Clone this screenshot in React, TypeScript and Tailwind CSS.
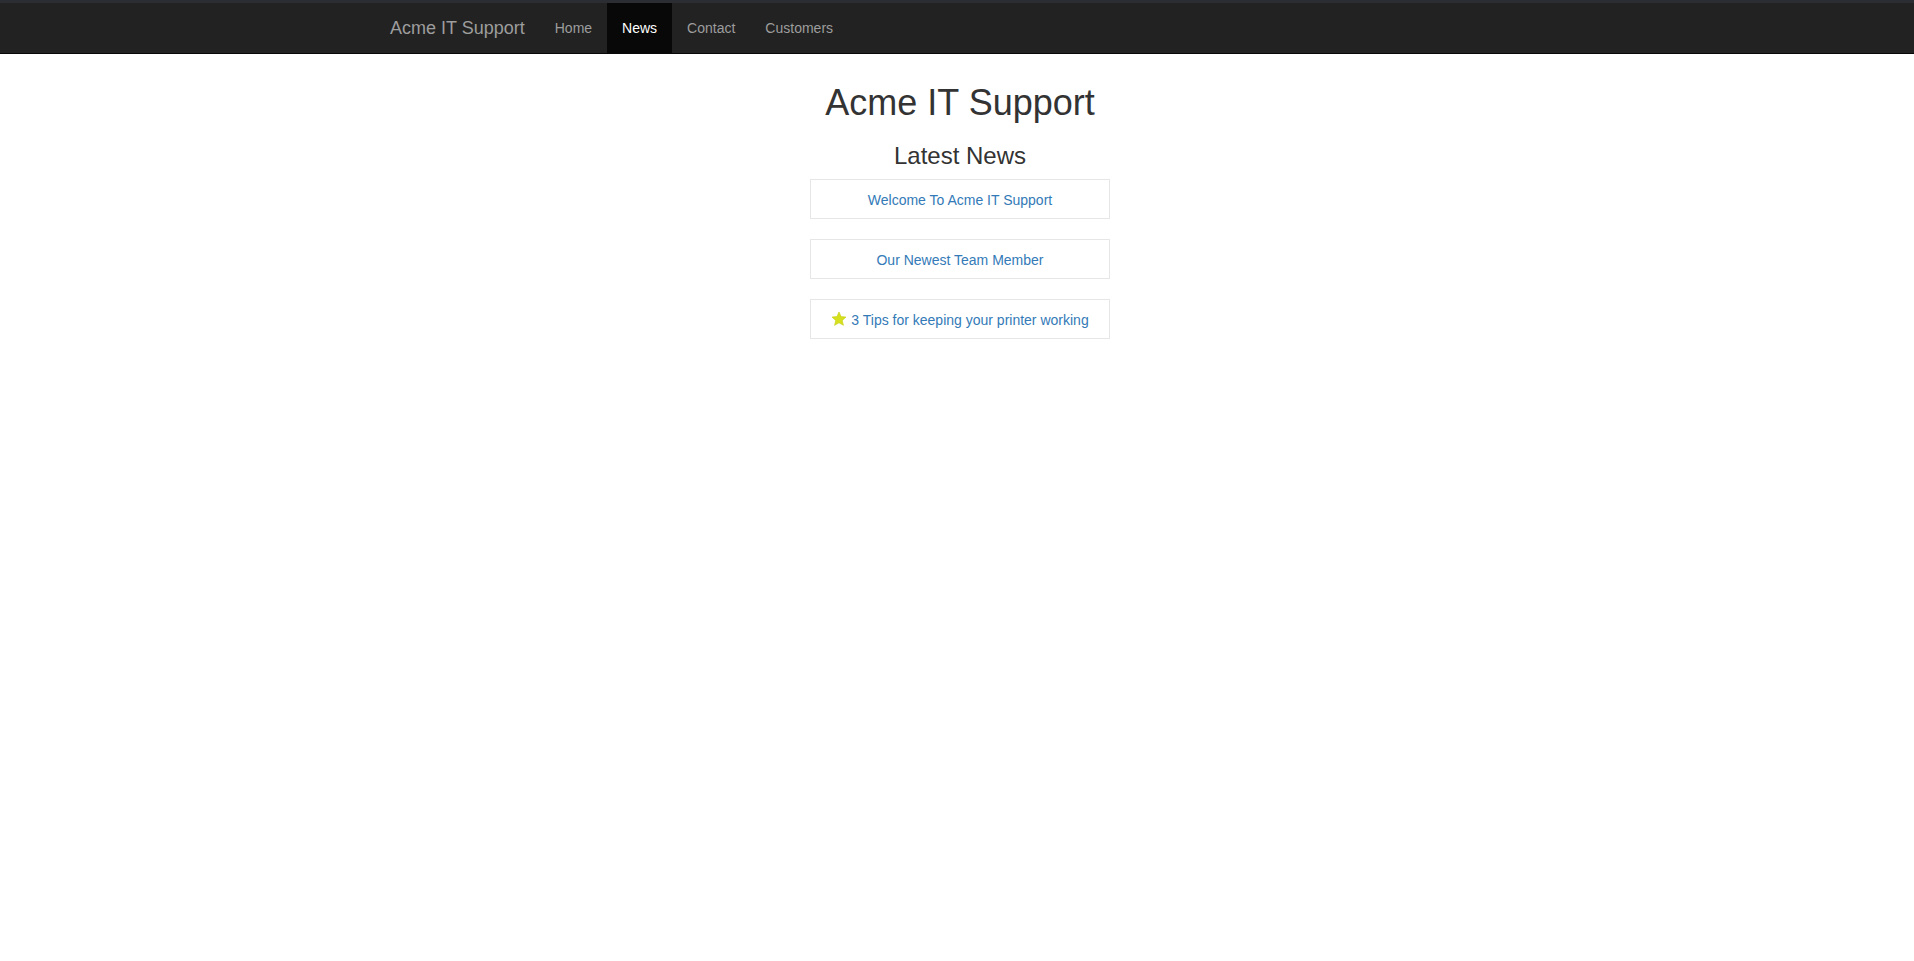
import React from "react";

const navLinks = [
    { label: "Home", active: false },
    { label: "News", active: true },
    { label: "Contact", active: false },
    { label: "Customers", active: false },
];

const Star = () => (
    <svg width="16" height="16" viewBox="0 0 24 24" className="inline-block align-[-2px] mr-[4px]">
        <path
            d="M12 1.5l3.1 6.9 7.4.7-5.6 5 1.7 7.4L12 17.7l-6.6 3.8 1.7-7.4-5.6-5 7.4-.7z"
            fill="#d6e01f"
            stroke="#c9d218"
            strokeWidth="1"
            strokeLinejoin="round"
        />
    </svg>
);

const App = () => {
    return (
        <div className="min-h-screen bg-white font-['Liberation_Sans',Arial,sans-serif] text-[14px] text-[#333]">
            <div className="h-[3px] bg-[#2c2c33]" />
            <nav className="h-[51px] bg-[#222] border-b border-[#080808]">
                <div className="flex h-[50px] pl-[375px]">
                    <a className="px-[15px] text-[18px] leading-[50px] text-[#9d9d9d]">Acme IT Support</a>
                    <ul className="flex">
                        {navLinks.map((link) => (
                            <li key={link.label}>
                                <a
                                    className={
                                        link.active
                                            ? "block px-[15px] leading-[50px] bg-[#080808] text-white"
                                            : "block px-[15px] leading-[50px] text-[#9d9d9d]"
                                    }
                                >
                                    {link.label}
                                </a>
                            </li>
                        ))}
                    </ul>
                </div>
            </nav>

            <main className="pl-[6px] flex flex-col items-center">
                <h1 className="mt-[29px] text-[36px] leading-[39.6px] font-normal">Acme IT Support</h1>
                <h3 className="mt-[20px] text-[24px] leading-[26.4px] font-normal">Latest News</h3>
                <div className="mt-[10px] flex flex-col gap-[20px] w-[300px]">
                    <a className="block border border-[#e6e6e6] pt-[10px] pb-[8px] text-center leading-[20px] text-[#337ab7]">
                        Welcome To Acme IT Support
                    </a>
                    <a className="block border border-[#e6e6e6] pt-[10px] pb-[8px] text-center leading-[20px] text-[#337ab7]">
                        Our Newest Team Member
                    </a>
                    <a className="block border border-[#e6e6e6] pt-[10px] pb-[8px] text-center leading-[20px] text-[#337ab7]">
                        <Star />3 Tips for keeping your printer working
                    </a>
                </div>
            </main>
        </div>
    );
};

export default App;
